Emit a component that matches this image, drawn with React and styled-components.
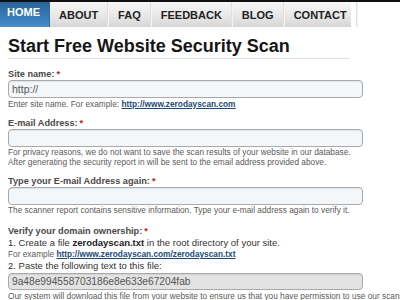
import React from "react"
import styled, {createGlobalStyle} from "styled-components"

const GlobalStyle = createGlobalStyle`
  body {
    margin: 0;
    background: #fff;
    font-family: "Liberation Sans", Arial, sans-serif;
    overflow: hidden;
  }
`

const TopBar = styled.div`
  border-top: 2px solid #111;
`

const Nav = styled.ul`
  display: flex;
  list-style: none;
  margin: 0;
  padding: 0;
  width: 351px;
  height: 25px;
  background: linear-gradient(#f7f7f7, #e6e6e6 60%, #d6d6d6);
`

const Tab = styled.li`
  display: flex;
  align-items: ${props => props.$active ? "flex-start" : "center"};
  padding: ${props => props.$active ? "4px 9px 0 7px" : "1px 10px 0 9px"};
  font-size: 11px;
  font-weight: bold;
  color: ${props => props.$active ? "#fff" : "#222"};
  background: ${props => props.$active ? "linear-gradient(#2a6499, #3a7fbd 70%, #4a8dca)" : "transparent"};
  border-right: 1px solid ${props => props.$active ? "#2f6fa8" : "#f4f4f4"};
  box-shadow: ${props => props.$active ? "none" : "inset -1px 0 0 #e0e0e0"};
`

const Main = styled.div`
  padding: 0 8px;
`

const Title = styled.h1`
  margin: 8px 0 0;
  width: 342px;
  padding-bottom: 1px;
  border-bottom: 1px solid #e2e2e2;
  font-size: 18px;
  line-height: 22px;
  font-weight: bold;
  color: #151515;
`

const Label = styled.div`
  margin-top: ${props => props.$gap || 8}px;
  font-size: 9.2px;
  line-height: 12px;
  font-weight: bold;
  color: #4a4a4a;
`

const Req = styled.span`
  color: #c62020;
  margin-left: 2px;
`

const Input = styled.div`
  box-sizing: border-box;
  width: 355px;
  height: ${props => props.$h || 18}px;
  margin-top: ${props => props.$top || 0}px;
  padding: 0 3px;
  display: flex;
  align-items: center;
  border: 1px solid #a9a9a9;
  border-radius: 4px;
  background: ${props => props.$readonly ? "#e3e3e3" : "#f3f7fa"};
  box-shadow: inset 0 1px 1px rgba(0,0,0,0.08);
  font-size: ${props => props.$readonly ? 10.2 : 10.5}px;
  color: #555;
`

const Help = styled.div`
  margin-top: ${props => props.$top || 0}px;
  font-size: 8.3px;
  line-height: 10px;
  color: #5a5a5a;
  white-space: nowrap;
`

const Step = styled.div`
  margin-top: ${props => props.$top || 0}px;
  font-size: 9.5px;
  line-height: 12px;
  color: #333;
  white-space: nowrap;
  b {
    color: #222;
  }
`

const Link = styled.a`
  color: #1d4a78;
  font-weight: bold;
  text-decoration: underline;
`

const tabs = ["HOME", "ABOUT", "FAQ", "FEEDBACK", "BLOG", "CONTACT"]

const App = () => {
  return (
    <>
      <GlobalStyle />
      <TopBar>
        <Nav>
          {tabs.map((t, i) => <Tab key={t} $active={i === 0}>{t}</Tab>)}
        </Nav>
      </TopBar>
      <Main>
        <Title>Start Free Website Security Scan</Title>

        <Label $gap={9}>Site name:<Req>*</Req></Label>
        <Input>http://</Input>
        <Help $top={1}>Enter site name. For example: <Link>http://www.zerodayscan.com</Link></Help>

        <Label>E-mail Address:<Req>*</Req></Label>
        <Input />
        <Help>For privacy reasons, we do not want to save the scan results of your website in our database.</Help>
        <Help>After generating the security report in will be sent to the email address provided above.</Help>

        <Label>Type your E-mail Address again:<Req>*</Req></Label>
        <Input />
        <Help>The scanner report contains sensitive information. Type your e-mail address again to verify it.</Help>

        <Label $gap={10}>Verify your domain ownership:<Req>*</Req></Label>
        <Step>1. Create a file <b>zerodayscan.txt</b> in the root directory of your site.</Step>
        <Help>For example <Link>http://www.zerodayscan.com/zerodayscan.txt</Link></Help>
        <Step $top={1}>2. Paste the following text to this file:</Step>
        <Input $readonly $h={17} $top={1}>9a48e994558703186e8e633e67204fab</Input>
        <Help $top={1}>Our system will download this file from your website to ensure us that you have permission to use our scanner.</Help>
      </Main>
    </>
  )
}

export default App
